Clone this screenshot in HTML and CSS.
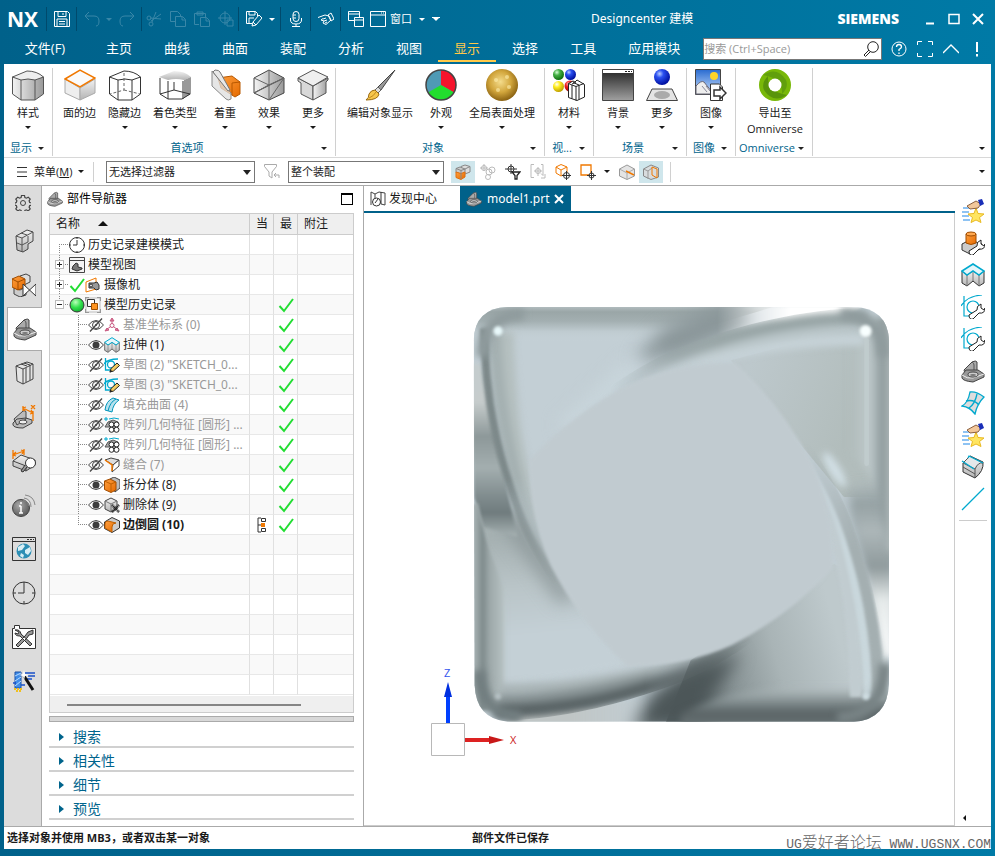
FILE: index.html
```html
<!DOCTYPE html>
<html lang="zh-CN">
<head>
<meta charset="utf-8">
<title>Designcenter 建模</title>
<link rel="stylesheet" href="styles.css">
</head>
<body>
<svg class="defs" aria-hidden="true">
  <defs>
    <linearGradient id="gS" x1="0" y1="0" x2="1" y2="0"><stop offset="0" stop-color="#f4f4f4"/><stop offset="1" stop-color="#999"/></linearGradient>
    <linearGradient id="gT" x1="0" y1="0" x2="0" y2="1"><stop offset="0" stop-color="#f2f2f2"/><stop offset="1" stop-color="#b4b4b4"/></linearGradient>
    <linearGradient id="gO" x1="0" y1="0" x2="1" y2="1"><stop offset="0" stop-color="#ffa040"/><stop offset="1" stop-color="#e56a00"/></linearGradient>
    <linearGradient id="gBg" x1="0" y1="0" x2="0" y2="1"><stop offset="0" stop-color="#222"/><stop offset="1" stop-color="#a0a0a0"/></linearGradient>
    <linearGradient id="gSky" x1="0" y1="0" x2="0" y2="1"><stop offset="0" stop-color="#2a6bd0"/><stop offset="1" stop-color="#cfe4ff"/></linearGradient>
    <radialGradient id="rBlue" cx=".35" cy=".3" r=".7"><stop offset="0" stop-color="#b8ccff"/><stop offset=".35" stop-color="#2a50f0"/><stop offset="1" stop-color="#0010a0"/></radialGradient>
    <radialGradient id="rGreen" cx=".35" cy=".3" r=".7"><stop offset="0" stop-color="#d8ffd8"/><stop offset=".4" stop-color="#44b044"/><stop offset="1" stop-color="#107010"/></radialGradient>
    <radialGradient id="rLime" cx=".4" cy=".3" r=".8"><stop offset="0" stop-color="#baffba"/><stop offset=".5" stop-color="#2fe04a"/><stop offset="1" stop-color="#12a030"/></radialGradient>
    <radialGradient id="rYel" cx=".35" cy=".3" r=".7"><stop offset="0" stop-color="#fff"/><stop offset=".4" stop-color="#ffee20"/><stop offset="1" stop-color="#c0a000"/></radialGradient>
    <radialGradient id="rRed" cx=".35" cy=".3" r=".7"><stop offset="0" stop-color="#ffb0b0"/><stop offset=".4" stop-color="#f02020"/><stop offset="1" stop-color="#a00000"/></radialGradient>
    <radialGradient id="rGold" cx=".45" cy=".4" r=".6"><stop offset="0" stop-color="#f4dc8c"/><stop offset=".55" stop-color="#d2a63c"/><stop offset="1" stop-color="#8a6212"/></radialGradient>
    <radialGradient id="rInfo" cx=".4" cy=".35" r=".7"><stop offset="0" stop-color="#aaa"/><stop offset="1" stop-color="#555"/></radialGradient>
  </defs>

  <symbol id="style" viewBox="0 0 32 32"><path d="M.5 8v17L9 31h14l8.500-6V8z" fill="url(#gS)" stroke="#555"/><path d="M.5 8 15 2q10 0 16.500 6L23 11q-7-2-14 0z" fill="#eee" stroke="#555"/><path d="M9 11v20M23 11v20" stroke="#555"/></symbol>
  <symbol id="faceedge" viewBox="0 0 32 32"><path d="M1 10 16 19v12L1 24z" fill="#eee" stroke="#aaa"/><path d="M31 10 16 19v12l15-7z" fill="url(#gT)" stroke="#aaa"/><path d="M1 10 16 1l15 8-15 9z" fill="#fafafa" stroke="#f07800" stroke-width="1.500"/></symbol>
  <symbol id="hidden" viewBox="0 0 32 32" ><path d="M.5 8 15 2q10 0 16.500 6L23 11q-7-2-14 0zM.5 8v17L9 31h14l8.500-6V8M9 11v20M23 11v20" fill="none" stroke="#333"/><path d="M15 4v17L1 25m14-4 16 4" fill="none" stroke="#666" stroke-dasharray="3 2"/></symbol>
  <symbol id="shade" viewBox="0 0 32 32"><path d="M0 8 15 2q11 0 17 6l-7 3q-8-2-16 0z" fill="url(#gT)"/><path d="M25 11l7-3v17l-7 4z" fill="#999"/><path d="M1 9v16l8 5h14l8-5M9 12v18M15 13v8L1 25m14-4 16 4M24 12v18" fill="none" stroke="#333"/></symbol>
  <symbol id="empha" viewBox="0 0 32 32"><path d="M9 9 23 7l8 6v12l-5 3-14-9z" fill="url(#gO)" stroke="#b85800"/><path d="M23 14l8-1M23 14v12" stroke="#b85800"/><path d="M3 2 22 24v6q-3 2-5 0L3 17z" fill="#ddd" fill-opacity=".75" stroke="#888"/><path d="M6 1q4 0 5 2l10 18-2 1L4 3z" fill="#e8e8e8" stroke="#777"/></symbol>
  <symbol id="effect" viewBox="0 0 32 32"><path d="M1 9 16 1l15 8v15l-15 7-15-7z" fill="url(#gS)" stroke="#444"/><path d="M1 9l15 7 15-7M16 1v15M1 24l15-8M31 9 16 31M16 16l-15 8M16 31V16l15-7M1 24 31 9" fill="none" stroke="#666"/></symbol>
  <symbol id="morebox" viewBox="0 0 32 32"><path d="M1 9l15 8v14L4 25V14l-3-2z" fill="#d8d8d8" stroke="#555"/><path d="M31 9 16 17v14l13-7V13l2-2z" fill="url(#gS)" stroke="#555"/><path d="M1 9 16 1l15 7-15 9z" fill="#efefef" stroke="#555"/></symbol>
  <symbol id="brush" viewBox="0 0 32 32"><path d="M31 1 17 21l-3-3z" fill="#999" stroke="#444"/><path d="M14 18l3 3-3 3-3-3z" fill="#ddd" stroke="#666"/><path d="M11 21l4 4q-1 6-13 6 3-2 3-6 2-4 6-4z" fill="#f7c64c" stroke="#9a6a10"/><path d="M5 29q5-2 7-6" fill="none" stroke="#c08a20"/></symbol>
  <symbol id="pie" viewBox="0 0 32 32"><circle cx="16" cy="16" r="15" fill="#4f9ab5"/><path d="M16 16V1a15 15 0 0 1 13 22.500z" fill="#f5132c"/><path d="M16 16l13 7.500a15 15 0 0 1-26 0z" fill="#22dd2e"/><circle cx="16" cy="16" r="15" fill="none" stroke="#444" stroke-width="1.500"/></symbol>
  <symbol id="gold" viewBox="0 0 32 32"><circle cx="16" cy="16" r="16" fill="url(#rGold)"/><g fill="#fff0b0" opacity=".6"><circle cx="10" cy="11" r="2"/><circle cx="21" cy="8" r="2"/><circle cx="23" cy="18" r="2"/><circle cx="12" cy="21" r="2"/></g></symbol>
  <symbol id="mater" viewBox="0 0 32 32"><circle cx="5.500" cy="5.500" r="5.500" fill="url(#rGreen)"/><circle cx="17.500" cy="5.500" r="5.500" fill="url(#rBlue)"/><circle cx="5.500" cy="17.500" r="5.500" fill="url(#rYel)"/><circle cx="17" cy="17" r="5.500" fill="url(#rRed)"/><path d="M15.500 14.500 20 12l2 1 2-2 7.500 4.500V28L24 31.500l-8.500-3z" fill="#fff" stroke="#222"/><path d="M15.500 14.500 19 16v13.500M19 15l4-2M19 16l4 1.500v14M20 13.500l6 2.500v14.500M23 17.500l8-3" fill="none" stroke="#222"/></symbol>
  <symbol id="backg" viewBox="0 0 32 32"><path d="M.5.5h31v31H.5z" fill="url(#gBg)" stroke="#444"/><path d="M1 1h30v3H1z" fill="#fff"/><path d="M23 2h2v1h-2zM26 2h2v1h-2zM29 2h1v1h-1z" fill="#222"/></symbol>
  <symbol id="scene" viewBox="0 0 32 32"><circle cx="16" cy="8" r="8" fill="url(#rBlue)"/><path d="M6 20h20l5.500 11.500H.5z" fill="#e4e4e4" stroke="#444"/><ellipse cx="16" cy="26" rx="8" ry="4" fill="#aaa"/></symbol>
  <symbol id="image" viewBox="0 0 32 32"><path d="M.5.5h25v25H.5z" fill="url(#gSky)" stroke="#444"/><circle cx="19" cy="7" r="4" fill="#ffd42a"/><path d="M1 17q5-6 8-4l8 10v2H1z" fill="#eee" stroke="#667"/><path d="M7 17l5 6M11 17l4 5" stroke="#889"/><path d="M15.500 15h9l3 3v13.500h-12z" fill="#fff" stroke="#333"/><path d="M19 21h6v-3l6 6-6 6v-3h-6z" fill="#fff" stroke="#333" stroke-width="1.500"/></symbol>
  <symbol id="omni" viewBox="0 0 32 32"><circle cx="16" cy="16" r="11" fill="none" stroke="#78b808" stroke-width="10"/><path d="M4 6Q18-3 27 11q3 7-4 14 1-16-19-19z" fill="#4e8a10" opacity=".55"/><path d="M28 26Q14 35 5 21 2 14 9 7 8 23 28 26z" fill="#3f760c" opacity=".55"/><circle cx="16" cy="16" r="6.500" fill="#fff"/></symbol>

  <symbol id="save" viewBox="0 0 16 16"><path d="M.5.5h13l2 2v13H.5zM4 .5v5h8v-5M9 2v2M3 15.500V8h10v7.500M5 10.500h6M5 13h6" fill="none" stroke="currentColor"/></symbol>
  <symbol id="undo" viewBox="0 0 16 16"><path d="M5 1 1 5l4 4M1 5h9q5 0 5 5t-3 5" fill="none" stroke="currentColor"/></symbol>
  <symbol id="redo" viewBox="0 0 16 16"><path d="M11 1l4 4-4 4M15 5H6q-5 0-5 5t3 5" fill="none" stroke="currentColor"/></symbol>
  <symbol id="cut" viewBox="0 0 16 16"><path d="M15 3 5 10M15 8 4 7M10 1 6 11" fill="none" stroke="currentColor"/><circle cx="3" cy="7" r="2" fill="none" stroke="currentColor"/><circle cx="5" cy="13" r="2" fill="none" stroke="currentColor"/></symbol>
  <symbol id="copy" viewBox="0 0 16 16"><path d="M5 10.500H.5V.5h7l3 3V5M5.500 5.500h7l3 3v7h-10zM12 6v3h3" fill="none" stroke="currentColor"/></symbol>
  <symbol id="paste" viewBox="0 0 16 16"><path d="M5 13.500H.5V2.500h11V6M3 4V1h6v3zM6.500 6.500h6l3 3v6h-9zM12 7v3h3" fill="none" stroke="currentColor"/></symbol>
  <symbol id="target" viewBox="0 0 16 16"><circle cx="7" cy="7" r="5" fill="none" stroke="currentColor"/><path d="M7 0v14M0 7h14M9 9h6v6H9z" fill="none" stroke="currentColor"/></symbol>
  <symbol id="saveas" viewBox="0 0 16 16"><path d="M6 12.500H.5V.5h9l2 2V5M3 .5V4h6V.5M3 12V7h5" fill="none" stroke="currentColor"/><path d="M6 15l1-4 6-7 3 3-6 7zM7 11l3 3" fill="none" stroke="currentColor"/></symbol>
  <symbol id="mic" viewBox="0 0 16 16"><rect x="5" y=".5" width="6" height="10" rx="3" fill="none" stroke="currentColor"/><path d="M5 4h3M5 7h3M2.500 7v2q0 4 5.500 4t5.500-4V7M8 13v2.500M4 15.500h8" fill="none" stroke="currentColor"/></symbol>
  <symbol id="hand" viewBox="0 0 16 16"><path d="M0 6.500 7 4l4 1 2 4-5 4.500-3-1.500 1-2-3-1 2-1.500M5 8l3-1M6 10l3-1M7 12l2-1" fill="none" stroke="currentColor"/><path d="M10 4l3-2 3 6-3 2z" fill="none" stroke="currentColor"/></symbol>
  <symbol id="windows" viewBox="0 0 16 16"><path d="M6 9.500H.5v-9h11V6M.5 3h11M6.500 6.500h9v9h-9zM6.500 9h9" fill="none" stroke="currentColor"/></symbol>
  <symbol id="window" viewBox="0 0 16 16"><path d="M.5.500h15v15H.5zM.5 4h15M11 2h1M13 2h1" fill="none" stroke="currentColor"/></symbol>
  <symbol id="search" viewBox="0 0 16 16"><circle cx="10" cy="6" r="5.300" fill="none" stroke="#222"/><path d="M6 9 1 14l1.500 1.500 5-5" fill="none" stroke="#222"/></symbol>
  <symbol id="help" viewBox="0 0 16 16"><circle cx="8" cy="8" r="7" fill="none" stroke="#fff"/><path d="M5.500 6q0-2.500 2.500-2.500T10.500 6Q10.500 7 8 8.500V10M8 11.500V13" fill="none" stroke="#fff" stroke-width="1.300"/></symbol>
  <symbol id="full" viewBox="0 0 16 16"><path d="M.5 4V.5H5M11 .5h4.500V4M15.500 12v3.500H11M5 15.500H.5V12" fill="none" stroke="#fff"/></symbol>

  <symbol id="part" viewBox="0 0 24 24"><path d="M3 11 11 3q4-2 5 0v9l-11 6z" fill="#aaa" stroke="#444"/><path d="M11 3q2 1 2 3v6" fill="none" stroke="#555"/><path d="M1 16l4-5 12 0 6 4v3l-11 5Q2 22 1 19z" fill="#999" stroke="#444"/><path d="M1 16q5 4 11 3l11-4" fill="none" stroke="#eee"/><ellipse cx="12" cy="15.500" rx="5" ry="2.500" fill="#ccc" stroke="#444"/><ellipse cx="12" cy="16" rx="3" ry="1" fill="#777"/></symbol>
  <symbol id="gear" viewBox="0 0 16 16"><circle cx="8" cy="8" r="2.500" fill="none" stroke="#444"/><path d="M6.500.5h3l.4 2 1.500.7 1.800-1 2 2-1.100 1.700.6 1.600 2 .4v2.300l-2 .4-.6 1.500 1.100 1.800-2 2-1.800-1.100-1.500.6-.4 2h-3l-.4-2-1.500-.6-1.800 1.100-2-2 1.100-1.800-.6-1.500-1.500-.4V8l1.500-.5.6-1.600-1.100-1.700 2-2 1.800 1 1.500-.7z" fill="none" stroke="#444" stroke-width="1.200"/></symbol>
  <symbol id="assy" viewBox="0 0 24 24"><path d="M4 7 15 1l6 2v9l-5 3v5l-5 3-6-2z" fill="url(#gT)" stroke="#444"/><path d="M4 7l6 2 11-6M10 9v14M5 14l5 2 6-3V7M9 4l6 2" fill="none" stroke="#555"/></symbol>
  <symbol id="constr" viewBox="0 0 24 24"><path d="M2 15l6 2 6-3v8l-6 2-6-3z" fill="#ccc" stroke="#444"/><path d="M8 3l6-2 4 2v6l-6 3z" fill="#ddd" stroke="#444"/><path d="M0 6l7-3 6 3v8l-7 3-6-3z" fill="url(#gO)" stroke="#a04c00"/><path d="M0 6l6 3 7-3M6 9v8" fill="none" stroke="#a04c00"/><path d="M11 11l13 12V11L11 23z" fill="#fff" stroke="#333"/></symbol>
  <symbol id="library" viewBox="0 0 24 24"><path d="M4 5 15 1l6 2v15l-10 5-6-3z" fill="#e4e4e4" stroke="#444"/><path d="M4 5l7 3v15M11 8l10-5M14 7v14M9 3l6 2M12 2l6 2v15" fill="none" stroke="#444"/></symbol>
  <symbol id="pmi" viewBox="0 0 24 24"><path d="M2 14 11 6q3-1 3 1v7l-9 6zM1 18l4-4 9-1 6 2v3l-9 5Q2 23 1 20z" fill="#bbb" stroke="#444"/><ellipse cx="11" cy="17" rx="4" ry="2" fill="#eee" stroke="#444"/><path d="M11 1v5M21 6v10M11 3l10 5M14 2l-3 1 2 3M19 5l2 3-3 1M19 0l4 4M23 0l-4 4" fill="none" stroke="#f07800" stroke-width="1.300"/></symbol>
  <symbol id="measure" viewBox="0 0 24 24"><path d="M1 12l8-6 14 5v5l-9 6-13-5z" fill="url(#gT)" stroke="#444"/><path d="M1 12l13 5 9-6M14 17v5" fill="none" stroke="#444"/><path d="M1 1v9M12 0v6M1 6l11-4M4 3 1 6l3 1M9 1l3 1-2 3" fill="none" stroke="#f07800" stroke-width="1.300"/><circle cx="18.500" cy="14" r="5" fill="#fff" stroke="#333"/><path d="M15 18l-4 5-2-1 4-6" fill="#999" stroke="#333"/></symbol>
  <symbol id="info" viewBox="0 0 24 24"><circle cx="9" cy="15" r="8.500" fill="url(#rInfo)" stroke="#444"/><path d="M9 9v2M9 13v7M7 13h2M7 20h4" stroke="#fff" stroke-width="1.500"/><path d="M12 5q7 1 7 9M13 2q9 1 10 10M11 7q5 1 6 6" fill="none" stroke="#888"/></symbol>
  <symbol id="web" viewBox="0 0 24 24"><path d="M.5.500h23v23H.5zM.5 4.500h23" fill="#ddd" stroke="#333"/><path d="M15 2.500h2M18 2.500h2M21 2.500h1" stroke="#333"/><circle cx="12" cy="14" r="7.500" fill="#2d8fb5"/><path d="M6 10l5-3 2 2-3 4-4 1zM13 13l5-3 1 4-3 4-3-2zM9 16l3 2-1 3-3-2z" fill="#d8eff6"/></symbol>
  <symbol id="clock" viewBox="0 0 24 24"><circle cx="12" cy="12" r="11" fill="none" stroke="#333"/><path d="M12 4v8H6M12 1v3M12 20v3M1 12h3M20 12h3" fill="none" stroke="#333"/></symbol>
  <symbol id="tclock" viewBox="0 0 16 16"><circle cx="8" cy="8" r="7.500" fill="#fff" stroke="#333"/><path d="M8 3v5H4M8 0v2M8 14v2M0 8h2M14 8h2" fill="none" stroke="#333"/></symbol>
  <symbol id="tools" viewBox="0 0 24 24"><path d="M.5 3.500h2v-3h5v3h16v20H.5z" fill="#fff" stroke="#333"/><path d="M3 5q5-1 6 4l11 10-2 2L8 11Q3 11 3 8l3 1 1-2zM21 5l-5 2-3 4-9 9 2 2 9-9 2-3 4-1z" fill="#999" stroke="#333"/></symbol>
  <symbol id="wizard" viewBox="0 0 24 24"><path d="M3 3h6v16H3z" fill="#3f8ce8" stroke="#1850a8"/><path d="M3 7l6-3M3 12l6-4M3 17l6-5" stroke="#b8dcff"/><path d="M23 4H13M23 7h-7M20 10h-5M9 16h4M1 14h3" stroke="#1850c8" stroke-width="1.500"/><path d="M12 7l9 14" stroke="#111" stroke-width="3"/><path d="M12 1l1 4 4 1-4 1-1 4-1-4-4-1 4-1z" fill="#fff"/><path d="M2 20h8M4 22h5" stroke="#f0c020" stroke-width="2" stroke-dasharray="2 1"/></symbol>

  <symbol id="view" viewBox="0 0 16 16"><path d="M.5.500h15v15H.5z" fill="#f4f4f4" stroke="#444"/><path d="M.5 3.500h15" stroke="#444"/><path d="M4 9l3-3 2 1v3l4 1v1l-5 2-5-2z" fill="#777" stroke="#333"/></symbol>
  <symbol id="tick" viewBox="0 0 16 16"><path d="M1.500 9l4.500 5L15 2" fill="none" stroke="#22dd33" stroke-width="2"/></symbol>
  <symbol id="camera" viewBox="0 0 16 16"><path d="M1 5l10-4v11L1 15z" fill="#fff" stroke="#f07800"/><path d="M4 6h5l3-1 2 3v4l-3 1-2-2H4z" fill="#999" stroke="#333"/><circle cx="6" cy="8.500" r="1.500" fill="#ddd" stroke="#333"/></symbol>
  <symbol id="ball" viewBox="0 0 16 16"><circle cx="8" cy="8" r="7" fill="url(#rLime)" stroke="#333"/></symbol>
  <symbol id="history" viewBox="0 0 16 16"><path d="M.5 4V.5H4M12 .5h3.500V4M15.500 12v3.500H12M4 15.500H.5V12" fill="none" stroke="#777"/><path d="M1 1h14v14H1z" fill="none" stroke="#bbb"/><path d="M2.500 2.500h7v7h-7z" fill="#fff" stroke="#333"/><path d="M6.500 6.500h6v6h-6z" fill="#ff9420" stroke="#a05000"/></symbol>
  <symbol id="eye" viewBox="0 0 16 16"><path d="M.5 8q3.500-4.500 7.500-4.500T15.500 8q-3.500 4.500-7.500 4.500T.5 8z" fill="#fff" stroke="#444"/><circle cx="8" cy="8" r="3.500" fill="#3c3c3c"/></symbol>
  <symbol id="eyeoff" viewBox="0 0 16 16"><path d="M.5 8q3.500-4.500 7.500-4.500T15.500 8q-3.500 4.500-7.500 4.500T.5 8z" fill="none" stroke="#444"/><circle cx="8" cy="8" r="3.500" fill="none" stroke="#444"/><circle cx="8" cy="8" r="1" fill="#444"/><path d="M2 14.500 14 1.500" stroke="#444" stroke-width="1.300"/></symbol>
  <symbol id="csys" viewBox="0 0 16 16"><path d="M8 8.500V2M8 8.500 2 13M8 8.500l6 4.500M8 1 6 4h4zM1 14l4-1-2-2zM15 14l-4-1 2-2z" fill="#e8a0b8" stroke="#c85880"/><circle cx="8" cy="8.500" r="2" fill="#fff" stroke="#c85880"/></symbol>
  <symbol id="extrude" viewBox="0 0 24 24"><path d="M1 8v12l5 3 6-5 6 5 5-3V8l-5 4-6-4-6 4z" fill="url(#gT)" stroke="#333"/><path d="M6 12v11M12 8v10M18 12v11" stroke="#777"/><path d="M1 8 12 1l11 7-5 4-6-4-6 4z" fill="#e6f6fa" stroke="#00a9ce" stroke-width="1.500"/></symbol>
  <symbol id="sketch" viewBox="0 0 16 16"><path d="M1.500 1v12H6M0 7q3-5 14-5" fill="none" stroke="#00a9ce" stroke-width="1.300"/><circle cx="7" cy="7.500" r="3.500" fill="none" stroke="#00a9ce" stroke-width="1.300"/><path d="M6 15l1-3.500 6-5.500 2.500 2.500-6 5.500z" fill="#f5cc60" stroke="#222"/><path d="M5.500 15.500l1-3 2 2z" fill="#222"/></symbol>
  <symbol id="fill" viewBox="0 0 16 16"><path d="M1 13Q2 4 9 1l6 2q-6 4-7 12z" fill="#b8e2ee" stroke="#0095bb"/><path d="M4 14Q6 5 12 2" fill="none" stroke="#0095bb"/></symbol>
  <symbol id="pattern" viewBox="0 0 16 16"><path d="M0 2h4M2 0v4M5 2q5-2 10 0" stroke="#00a9ce" fill="none"/><path d="M1 10l3-5 5-2 5 2v5H4z" fill="#aaa" stroke="#555"/><g fill="#fff" stroke="#222"><circle cx="7.500" cy="7.500" r="2.500"/><circle cx="12.500" cy="7.500" r="2.500"/><circle cx="7.500" cy="12.800" r="2.500"/><circle cx="12.500" cy="12.800" r="2.500"/></g></symbol>
  <symbol id="sew" viewBox="0 0 16 16"><path d="M1 3l6-2 8 2-6 5z" fill="#ddd" stroke="#444"/><path d="M9 8l6-5v6l-7 6z" fill="#fff" stroke="#444"/><path d="M1 3l7 5v6" fill="none" stroke="#f07800" stroke-width="1.500"/></symbol>
  <symbol id="split" viewBox="0 0 16 16"><path d="M6 2l4-2 6 3v8l-5 4z" fill="#bbb" stroke="#444"/><path d="M.5 4 6 2l6 3v8l-5 2.500-6.500-3z" fill="url(#gO)" stroke="#a04c00"/><path d="M.5 4 7 7l5-2M7 7v8" fill="none" stroke="#c06000"/></symbol>
  <symbol id="delbody" viewBox="0 0 16 16"><path d="M1 4l6-3 6 3v8l-6 3-6-3z" fill="url(#gT)" stroke="#444"/><path d="M1 4l6 3 6-3M7 7v8" fill="none" stroke="#777"/><path d="M8 8l7 7M15 8l-7 7" stroke="#222" stroke-width="2.500" stroke-dasharray="1 .5"/></symbol>
  <symbol id="blend" viewBox="0 0 16 16"><path d="M.5 5 8 .5 15.500 4v7L8 15.500l-7.500-4z" fill="#ccc" stroke="#333"/><path d="M1 7q0-3 3-3l8 2q-4 0-4 4v5l-7-4z" fill="url(#gO)" stroke="#c06000"/></symbol>
  <symbol id="branch" viewBox="0 0 10 16"><path d="M4 1H1v14h3M1 8h3" fill="none" stroke="#333"/><path d="M4.500 1.500h4v3h-4zM4.500 11.500h4v3h-4z" fill="#fff" stroke="#333"/><path d="M4 6h4v4H4z" fill="#f07800"/></symbol>

  <symbol id="fcyl" viewBox="0 0 16 16"><path d="M6 2.500 10 1l5 1.500V8l-5 2z" fill="#ddd" stroke="#888"/><path d="M1 4.500 5 3l5 2v4L6 10 1 8.500z" fill="#ccc" stroke="#888"/><path d="M1 8l5 1.500L10 8v5l-4 2.500-5-2z" fill="url(#gO)" stroke="#e07010"/><path d="M6 6.500V15M1 4.500l5 2L10 5l5-2.500" fill="none" stroke="#888"/></symbol>
  <symbol id="chain" viewBox="0 0 16 16"><path d="M4 0v7M0 4h8" stroke="#bbb"/><g fill="none" stroke="#bbb"><circle cx="4" cy="4" r="2.500"/><circle cx="9" cy="8" r="3"/><circle cx="12" cy="6" r="3"/><circle cx="8" cy="13" r="2.500"/></g></symbol>
  <symbol id="ptfilter" viewBox="0 0 16 16"><circle cx="6" cy="5" r="3" fill="none" stroke="#333"/><path d="M6 0v10M0 5h12" stroke="#333"/><path d="M7 8h8l-3 3.500V15l-2 0v-3.500z" fill="#fff" stroke="#222" stroke-width="1.300"/></symbol>
  <symbol id="snapoff" viewBox="0 0 16 16"><path d="M4 .5H1v13h3M11 .5h2v11l-2-2M8 3v9M4 7h8M11 14h4v-4" fill="none" stroke="#bbb"/><circle cx="8" cy="7" r="2.500" fill="none" stroke="#bbb"/></symbol>
  <symbol id="orient" viewBox="0 0 16 16"><path d="M1 3l5-2.500L12 3v6l-6 3-5-3zM1 3l5 3 6-3M6 6v6" fill="#fff" stroke="#f07800"/><circle cx="11.500" cy="11.500" r="3" fill="#fff" stroke="#333"/><path d="M11.500 7v9M7 11.500h9" stroke="#333"/></symbol>
  <symbol id="rect" viewBox="0 0 16 16"><path d="M1 1h10v10H1z" fill="none" stroke="#f07800" stroke-width="1.300"/><circle cx="11.500" cy="11.500" r="2.500" fill="#fff" stroke="#333"/><path d="M11.500 7v9M7 11.500h9" stroke="#333"/></symbol>
  <symbol id="cube1" viewBox="0 0 16 16"><path d="M.5 5 8 1l7.500 4v7L8 15.500.5 12z" fill="#e4e4e4" stroke="#999"/><path d="M.5 5 8 9l7.500-4M8 9v6" fill="none" stroke="#aaa"/><path d="M7 7l8 4" stroke="#f07800" stroke-width="1.500"/></symbol>
  <symbol id="cube2" viewBox="0 0 16 16"><path d="M.5 5 8 1l7.500 3v9L8 15.500.5 12z" fill="#d8dcde" stroke="#888"/><path d="M.5 5 5 7v8M5 7l4-3" fill="none" stroke="#999"/><path d="M9 3v8l5 3V5z" fill="none" stroke="#f07800"/></symbol>
  <symbol id="funnel" viewBox="0 0 16 16"><path d="M.5.500h12v2L8 8v6l-3-2V8L.5 2.500zM10 11h5v3M12 9l-2 2 2 2" fill="none" stroke="#aaa"/></symbol>
  <symbol id="discover" viewBox="0 0 16 16"><path d="M1 1l4 2v6M1 1v13M5 3l4-2 6 1v12l-4-1" fill="none" stroke="#444"/><circle cx="6.500" cy="11" r="4" fill="#fff" stroke="#333"/><path d="M5 12l3-4M11 1v12" stroke="#333"/></symbol>

  <symbol id="fav" viewBox="0 0 24 24"><path d="M2 9h8M1 13h7M1 17h7M2 21h7" stroke="#6ab0f0" stroke-width="1.300"/><path d="M15 9l2 5.500 6 .5-4.500 3.500 1.500 5-5-2.500-5 2.500 1.500-5L7 15l6-.5z" fill="#ffe560" stroke="#e8b820"/><path d="M6 7l9-5 5 3-3 4-8 1z" fill="#f2c79a" stroke="#8a6040"/><path d="M17 1l4-1 2 5-4 2z" fill="#1a2fb8"/></symbol>
  <symbol id="cylwrench" viewBox="0 0 24 24"><path d="M1 13l8-4 12 4v4L9 23l-8-4z" fill="#ccc" stroke="#333"/><path d="M5 3v9q5 3 10 0V3z" fill="url(#gO)" stroke="#a04c00"/><ellipse cx="10" cy="3" rx="5" ry="2" fill="#ffa850" stroke="#a04c00"/><path d="M8 20l8-5q-1-4 4-6v4l3 2 1-2q0 6-6 5l-6 6q-4 1-4-4z" fill="#fff" stroke="#222"/></symbol>
  <symbol id="skwrench" viewBox="0 0 24 24"><path d="M3 1v20h7M0 11Q6 1 21 0" fill="none" stroke="#00a9ce" stroke-width="1.200"/><circle cx="12" cy="12" r="6" fill="none" stroke="#00a9ce" stroke-width="1.200"/><path d="M8 20l8-5q-1-4 4-6v4l3 2 1-2q0 6-6 5l-6 6q-4 1-4-4z" fill="#fff" stroke="#222"/></symbol>
  <symbol id="mesh" viewBox="0 0 24 24"><path d="M1 15Q7 12 9 1q6-1 14 5-7 7-9 17-5-7-13-8z" fill="#ddd" stroke="#00a9ce" stroke-width="1.300"/><path d="M8 17q6-4 8-14M5 10q8-2 13 4" fill="none" stroke="#00a9ce" stroke-width="1.300"/></symbol>
  <symbol id="trim" viewBox="0 0 24 24"><path d="M2 8 9 1l13 6q1 9-8 16L2 17z" fill="url(#gT)" stroke="#333"/><path d="M9 1l13 7q-5-1-8 6L2 8z" fill="#e4e8ea" stroke="#555"/><path d="M7 3l1-2 14 7M1 6l12 8" fill="none" stroke="#00a9ce" stroke-width="1.300"/><path d="M14 14v9M2 12l12 7" fill="none" stroke="#555"/></symbol>
  <symbol id="line" viewBox="0 0 24 24"><path d="M1 23 23 1" stroke="#00a9ce" stroke-width="1.300"/></symbol>
</svg>

<header class="top">
  <div class="title-row">
    <strong class="nx">NX</strong>
    <i class="sep"></i>
    <button class="q" aria-label="保存"><svg><use href="#save"/></svg></button><i class="sep"></i>
    <button class="q dim" aria-label="撤销"><svg><use href="#undo"/></svg></button><i class="arr dim"></i><button class="q dim" aria-label="重做"><svg><use href="#redo"/></svg></button><i class="sep"></i>
    <button class="q tight dim" aria-label="剪切"><svg><use href="#cut"/></svg></button><button class="q tight dim" aria-label="复制"><svg><use href="#copy"/></svg></button><button class="q tight dim" aria-label="粘贴"><svg><use href="#paste"/></svg></button><button class="q tight dim" aria-label="重复"><svg><use href="#target"/></svg></button><i class="sep"></i>
    <button class="q" aria-label="另存为"><svg><use href="#saveas"/></svg></button><i class="arr wide"></i><i class="sep"></i>
    <button class="q" aria-label="语音"><svg><use href="#mic"/></svg></button><i class="sep"></i>
    <button class="q" aria-label="触控"><svg><use href="#hand"/></svg></button><i class="sep"></i>
    <button class="q" aria-label="切换窗口"><svg><use href="#windows"/></svg></button>
    <button class="winbtn"><svg><use href="#window"/></svg>窗口<i class="arr"></i></button>
    <i class="arr bar"></i>
    <span class="app">Designcenter 建模</span>
    <strong class="brand">SIEMENS</strong>
    <div class="wctl">
      <button aria-label="最小化"><svg viewBox="0 0 12 12"><path d="M2 10.500h8" stroke="#fff" stroke-width="2"/></svg></button>
      <button aria-label="最大化"><svg viewBox="0 0 12 12"><path d="M1 1.500h10v9H1z" fill="none" stroke="#fff" stroke-width="1.500"/></svg></button>
      <button aria-label="关闭"><svg viewBox="0 0 12 12"><path d="M1 1l10 10M11 1 1 11" stroke="#fff" stroke-width="2"/></svg></button>
    </div>
  </div>
  <nav class="tab-row">
    <a class="file" href="#">文件(F)</a><a href="#">主页</a><a href="#">曲线</a><a href="#">曲面</a><a href="#">装配</a><a href="#">分析</a><a href="#">视图</a><a class="on" href="#">显示</a><a href="#">选择</a><a href="#">工具</a><a href="#">应用模块</a>
    <div class="find"><input type="search" aria-label="搜索" placeholder="搜索 (Ctrl+Space)"><button aria-label="搜索"><svg><use href="#search"/></svg></button></div>
    <div class="tctl">
      <button aria-label="帮助"><svg><use href="#help"/></svg></button>
      <button aria-label="全屏"><svg><use href="#full"/></svg></button>
      <button aria-label="折叠"><svg viewBox="0 0 16 16"><path d="M0 12l8-8 8 8" fill="none" stroke="#fff" stroke-width="1.300"/></svg></button>
      <button aria-label="提醒"><svg viewBox="0 0 16 16"><path d="M8 1v10M8 13v2.500" stroke="#fff" stroke-width="2"/></svg></button>
    </div>
  </nav>
</header>

<div class="frame">
<section class="ribbon">
  <div class="group"><div class="items"><button><svg><use href="#style"/></svg>样式<i class="arr"></i></button></div><div class="gl"><span>显示</span><i class="arr"></i></div></div>
  <div class="group lead"><div class="items">
    <button><svg><use href="#faceedge"/></svg>面的边</button>
    <button><svg><use href="#hidden"/></svg>隐藏边<i class="arr"></i></button>
    <button><svg><use href="#shade"/></svg>着色类型<i class="arr"></i></button>
    <button><svg><use href="#empha"/></svg>着重<i class="arr"></i></button>
    <button><svg><use href="#effect"/></svg>效果<i class="arr"></i></button>
    <button><svg><use href="#morebox"/></svg>更多<i class="arr"></i></button>
  </div><div class="gl"><span>首选项</span><i class="arr"></i></div></div>
  <div class="group roomy"><div class="items">
    <button><svg><use href="#brush"/></svg>编辑对象显示</button>
    <button><svg><use href="#pie"/></svg>外观<i class="arr"></i></button>
    <button><svg><use href="#gold"/></svg>全局表面处理<i class="arr"></i></button>
  </div><div class="gl"><span>对象</span><i class="arr"></i></div></div>
  <div class="group"><div class="items"><button><svg><use href="#mater"/></svg>材料<i class="arr"></i></button></div><div class="gl"><span>视...</span><i class="arr"></i></div></div>
  <div class="group"><div class="items"><button><svg><use href="#backg"/></svg>背景<i class="arr"></i></button><button><svg><use href="#scene"/></svg>更多<i class="arr"></i></button></div><div class="gl"><span>场景</span><i class="arr"></i></div></div>
  <div class="group"><div class="items"><button><svg><use href="#image"/></svg>图像<i class="arr"></i></button></div><div class="gl"><span>图像</span><i class="arr"></i></div></div>
  <div class="group roomy"><div class="items"><button><svg><use href="#omni"/></svg>导出至<br>Omniverse</button></div><div class="gl"><span>Omniverse</span><i class="arr"></i></div></div>
  <i class="arr end"></i>
</section>

<section class="toolbar">
  <button class="menu"><svg viewBox="0 0 12 12"><path d="M1 1.500h10M1 6h10M1 10.500h10" stroke="#333"/></svg><span>菜单(<u>M</u>)</span><i class="arr"></i></button>
  <i class="vsep"></i>
  <label class="combo c1"><select aria-label="选择过滤器"><option>无选择过滤器</option></select></label>
  <button class="tb funnel" aria-label="重置过滤器"><svg><use href="#funnel"/></svg></button>
  <label class="combo c2"><select aria-label="选择范围"><option>整个装配</option></select></label>
  <div class="tbs">
    <button class="tb on" aria-label="常规选择"><svg><use href="#fcyl"/></svg></button>
    <button class="tb" aria-label="链"><svg><use href="#chain"/></svg></button>
    <button class="tb" aria-label="点过滤"><svg><use href="#ptfilter"/></svg></button>
    <button class="tb" aria-label="捕捉"><svg><use href="#snapoff"/></svg></button>
    <button class="tb" aria-label="定向"><svg><use href="#orient"/></svg></button>
    <button class="tb" aria-label="矩形"><svg><use href="#rect"/></svg></button>
    <i class="arr"></i>
    <button class="tb" aria-label="着色"><svg><use href="#cube1"/></svg></button>
    <button class="tb on" aria-label="截面"><svg><use href="#cube2"/></svg></button>
  </div>
  <i class="vsep"></i>
  <i class="arr end"></i>
</section>

<main>
  <nav class="rail">
    <button aria-label="设置"><svg class="sm"><use href="#gear"/></svg></button>
    <button aria-label="装配导航器"><svg><use href="#assy"/></svg></button>
    <button aria-label="约束导航器"><svg><use href="#constr"/></svg></button>
    <button class="on" aria-label="部件导航器"><svg><use href="#part"/></svg></button>
    <button aria-label="重用库"><svg><use href="#library"/></svg></button>
    <button aria-label="尺寸"><svg><use href="#pmi"/></svg></button>
    <button aria-label="测量"><svg><use href="#measure"/></svg></button>
    <button aria-label="信息"><svg><use href="#info"/></svg></button>
    <button aria-label="浏览器"><svg><use href="#web"/></svg></button>
    <button aria-label="历史"><svg><use href="#clock"/></svg></button>
    <button aria-label="工具"><svg><use href="#tools"/></svg></button>
    <button aria-label="向导"><svg><use href="#wizard"/></svg></button>
  </nav>

  <aside class="panel">
    <h2><svg><use href="#part"/></svg>部件导航器<button class="max" aria-label="最大化"></button></h2>
    <div class="treebox">
    <table>
      <colgroup><col class="cn"><col class="c24"><col class="c24"><col></colgroup>
      <thead><tr><th>名称<i class="up"></i></th><th>当</th><th>最</th><th>附注</th></tr></thead>
      <tbody>
        <tr><td><div class="node root first"><i class="stem"></i><svg><use href="#tclock"/></svg><span>历史记录建模模式</span></div></td><td></td><td></td><td></td></tr>
        <tr><td><div class="node root"><i class="stem"></i><b class="ex plus"></b><svg><use href="#view"/></svg><span>模型视图</span></div></td><td></td><td></td><td></td></tr>
        <tr><td><div class="node root"><i class="stem"></i><b class="ex plus"></b><svg><use href="#tick"/></svg><svg><use href="#camera"/></svg><span>摄像机</span></div></td><td></td><td></td><td></td></tr>
        <tr><td><div class="node root last"><i class="stem"></i><b class="ex"></b><svg><use href="#ball"/></svg><svg><use href="#history"/></svg><span>模型历史记录</span></div></td><td></td><td><svg><use href="#tick"/></svg></td><td></td></tr>
        <tr><td><div class="node off"><i class="stem"></i><svg><use href="#eyeoff"/></svg><svg><use href="#csys"/></svg><span>基准坐标系 (0)</span></div></td><td></td><td><svg><use href="#tick"/></svg></td><td></td></tr>
        <tr><td><div class="node"><i class="stem"></i><svg><use href="#eye"/></svg><svg><use href="#extrude"/></svg><span>拉伸 (1)</span></div></td><td></td><td><svg><use href="#tick"/></svg></td><td></td></tr>
        <tr><td><div class="node off"><i class="stem"></i><svg><use href="#eyeoff"/></svg><svg><use href="#sketch"/></svg><span>草图 (2) "SKETCH_0...</span></div></td><td></td><td><svg><use href="#tick"/></svg></td><td></td></tr>
        <tr><td><div class="node off"><i class="stem"></i><svg><use href="#eyeoff"/></svg><svg><use href="#sketch"/></svg><span>草图 (3) "SKETCH_0...</span></div></td><td></td><td><svg><use href="#tick"/></svg></td><td></td></tr>
        <tr><td><div class="node off"><i class="stem"></i><svg><use href="#eyeoff"/></svg><svg><use href="#fill"/></svg><span>填充曲面 (4)</span></div></td><td></td><td><svg><use href="#tick"/></svg></td><td></td></tr>
        <tr><td><div class="node off"><i class="stem"></i><svg><use href="#eyeoff"/></svg><svg><use href="#pattern"/></svg><span>阵列几何特征 [圆形] ...</span></div></td><td></td><td><svg><use href="#tick"/></svg></td><td></td></tr>
        <tr><td><div class="node off"><i class="stem"></i><svg><use href="#eyeoff"/></svg><svg><use href="#pattern"/></svg><span>阵列几何特征 [圆形] ...</span></div></td><td></td><td><svg><use href="#tick"/></svg></td><td></td></tr>
        <tr><td><div class="node off"><i class="stem"></i><svg><use href="#eyeoff"/></svg><svg><use href="#sew"/></svg><span>缝合 (7)</span></div></td><td></td><td><svg><use href="#tick"/></svg></td><td></td></tr>
        <tr><td><div class="node"><i class="stem"></i><svg><use href="#eye"/></svg><svg><use href="#split"/></svg><span>拆分体 (8)</span></div></td><td></td><td><svg><use href="#tick"/></svg></td><td></td></tr>
        <tr><td><div class="node"><i class="stem"></i><svg><use href="#eye"/></svg><svg><use href="#delbody"/></svg><span>删除体 (9)</span></div></td><td></td><td><svg><use href="#tick"/></svg></td><td></td></tr>
        <tr><td><div class="node last cur"><i class="stem"></i><svg><use href="#eye"/></svg><svg><use href="#blend"/></svg><span>边倒圆 (10)</span></div></td><td><svg><use href="#branch"/></svg></td><td><svg><use href="#tick"/></svg></td><td></td></tr>
        <tr><td></td><td></td><td></td><td></td></tr>
        <tr><td></td><td></td><td></td><td></td></tr>
        <tr><td></td><td></td><td></td><td></td></tr>
        <tr><td></td><td></td><td></td><td></td></tr>
        <tr><td></td><td></td><td></td><td></td></tr>
        <tr><td></td><td></td><td></td><td></td></tr>
        <tr><td></td><td></td><td></td><td></td></tr>
        <tr><td></td><td></td><td></td><td></td></tr>
      </tbody>
    </table>
    <div class="hscroll"><i></i></div>
    </div>
    <div class="splitter"></div>
    <div class="folds"><button>搜索</button><button>相关性</button><button>细节</button><button>预览</button></div>
  </aside>

  <section class="work">
    <div class="docs"><a href="#" class="doc"><svg><use href="#discover"/></svg>发现中心</a><div class="doc on"><svg><use href="#part"/></svg><span>model1.prt</span><button aria-label="关闭"><svg viewBox="0 0 10 10"><path d="M1 1l8 8M9 1 1 9" stroke="#fff" stroke-width="2"/></svg></button></div></div>
    <div class="canvas">
      <svg viewBox="364 213 590 612" preserveAspectRatio="xMinYMin meet">
        <defs>
          <clipPath id="body"><path d="M29 130Q32 34 130 30H1170Q1270 34 1275 130V1160Q1270 1268 1170 1274H130Q36 1266 32 1165Z"/></clipPath>
          <clipPath id="ridge"><path d="M1180 32C1000 42 860 78 740 118 640 150 560 185 430 275L380 310V560H1060L1290 330V20Z"/></clipPath>
          <linearGradient id="fade" x1="440" y1="0" x2="760" y2="0" gradientUnits="userSpaceOnUse"><stop offset="0" stop-color="#000"/><stop offset="1" stop-color="#fff"/></linearGradient>
          <mask id="taper" maskUnits="userSpaceOnUse" x="300" y="0" width="1000" height="600"><path d="M300 0h1000v600H300z" fill="url(#fade)"/></mask>
          <path id="c1" d="M1210 60C990 64 840 104 730 140 630 172 560 205 440 280"/>
          <path id="c2" d="M1200 92C1000 96 850 132 730 162 640 188 560 222 430 300"/>
          <path id="c3" d="M1200 128C1000 130 860 154 730 184 640 204 560 238 420 320"/>
          <filter id="f6" x="-30%" y="-30%" width="160%" height="160%" color-interpolation-filters="sRGB"><feGaussianBlur stdDeviation="5"/></filter>
          <filter id="f12" x="-50%" y="-50%" width="200%" height="200%" color-interpolation-filters="sRGB"><feGaussianBlur stdDeviation="11"/></filter>
          <filter id="f25" x="-60%" y="-60%" width="220%" height="220%" color-interpolation-filters="sRGB"><feGaussianBlur stdDeviation="26"/></filter>
          <linearGradient id="mTop" x1="0" y1="30" x2="0" y2="135" gradientUnits="userSpaceOnUse"><stop offset="0" stop-color="#b0bbbd"/><stop offset=".14" stop-color="#9aa6a7"/><stop offset=".4" stop-color="#a3afb1"/><stop offset=".7" stop-color="#bfcbd0"/><stop offset="1" stop-color="#c5d1d7" stop-opacity="0"/></linearGradient>
          <linearGradient id="mBot" x1="0" y1="1165" x2="0" y2="1274" gradientUnits="userSpaceOnUse"><stop offset="0" stop-color="#bac4c6" stop-opacity="0"/><stop offset=".3" stop-color="#98a3a5"/><stop offset=".6" stop-color="#6e797b"/><stop offset=".8" stop-color="#586163"/><stop offset="1" stop-color="#667072"/></linearGradient>
          <linearGradient id="mRight" x1="1150" y1="0" x2="1275" y2="0" gradientUnits="userSpaceOnUse"><stop offset="0" stop-color="#b3bebe" stop-opacity="0"/><stop offset=".45" stop-color="#bcc7c8"/><stop offset=".6" stop-color="#bac5c7"/><stop offset=".75" stop-color="#97a3a5"/><stop offset=".93" stop-color="#8f9b9d"/><stop offset="1" stop-color="#b3bcbd"/></linearGradient>
          <linearGradient id="mLeft" x1="30" y1="0" x2="135" y2="0" gradientUnits="userSpaceOnUse"><stop offset="0" stop-color="#a8b2b3"/><stop offset=".25" stop-color="#7f8b8c"/><stop offset=".45" stop-color="#9da8a9"/><stop offset=".8" stop-color="#b3bebf"/><stop offset="1" stop-color="#c2ced3" stop-opacity="0"/></linearGradient>
          <linearGradient id="mBR" x1="700" y1="1130" x2="1120" y2="1010" gradientUnits="userSpaceOnUse"><stop offset="0" stop-color="#6c7779"/><stop offset=".22" stop-color="#899496"/><stop offset=".55" stop-color="#a9b4b6"/><stop offset="1" stop-color="#bec9cc"/></linearGradient>
          <linearGradient id="mTR" x1="860" y1="200" x2="1180" y2="330" gradientUnits="userSpaceOnUse"><stop offset="0" stop-color="#bdc8cc"/><stop offset="1" stop-color="#b2bdbc"/></linearGradient>
          <linearGradient id="mBL" x1="300" y1="700" x2="330" y2="1000" gradientUnits="userSpaceOnUse"><stop offset="0" stop-color="#a6b1b2"/><stop offset=".5" stop-color="#b9c4c7"/><stop offset="1" stop-color="#c4d0d6"/></linearGradient>
          <linearGradient id="mShine" x1="760" y1="0" x2="980" y2="0" gradientUnits="userSpaceOnUse"><stop offset="0" stop-color="#fff" stop-opacity="0"/><stop offset="1" stop-color="#fff"/></linearGradient>
          <linearGradient id="mShine2" x1="560" y1="0" x2="330" y2="0" gradientUnits="userSpaceOnUse"><stop offset="0" stop-color="#c0c6c6" stop-opacity="0"/><stop offset="1" stop-color="#c0c6c6"/></linearGradient>
          <linearGradient id="mEdgeL" x1="0" y1="200" x2="0" y2="720" gradientUnits="userSpaceOnUse"><stop offset="0" stop-color="#c3cccd"/><stop offset=".22" stop-color="#c6cccc"/><stop offset=".42" stop-color="#8d9899"/><stop offset=".6" stop-color="#a3aeaf"/><stop offset=".78" stop-color="#7d898b"/><stop offset=".86" stop-color="#6f7b7d"/><stop offset="1" stop-color="#a8b3b4"/></linearGradient>
          <linearGradient id="mEdgeR" x1="0" y1="540" x2="0" y2="1080" gradientUnits="userSpaceOnUse"><stop offset="0" stop-color="#b6c1c4" stop-opacity="0"/><stop offset=".15" stop-color="#96a2a4"/><stop offset=".3" stop-color="#adb7b9"/><stop offset=".5" stop-color="#8f9a9c"/><stop offset=".68" stop-color="#e4e9e9"/><stop offset="1" stop-color="#fff"/></linearGradient>
        </defs>
        <g transform="translate(464 297) scale(.33333)">
          <g clip-path="url(#body)">
            <path d="M0 0h1304v1304H0z" fill="#c3cfd5"/>
            <path d="M800 190 1290 60V600H1140z" fill="url(#mTR)"/>
            <path d="M40 640 150 640 262 804 500 1110 90 1180z" fill="url(#mBL)" filter="url(#f12)"/>
            <path d="M1110 800 1270 900V1290H600L680 1090z" fill="url(#mBR)"/>
            <path d="M0 20h960L560 140H0z" fill="url(#mTop)"/>
            <g filter="url(#f25)">
              <path d="M780 15 600 90 510 190 640 180 860 90 850 15z" fill="#8a9699"/>
              <path d="M140 620 330 900 290 920 120 690z" fill="#8f9a9c"/>
              <path d="M1150 600 1280 580 1280 860 1210 800z" fill="#939fa1"/>
              <path d="M500 1300 560 1190 640 1130 830 1070 740 1200 720 1300z" fill="#4c5658"/>
            </g>
            <path d="M760 25H1200L1150 60 760 130z" fill="url(#mShine)" filter="url(#f6)"/>
            <path d="M20 200H50L160 720 60 690 30 600z" fill="url(#mEdgeL)" filter="url(#f6)"/>
            <path d="M1150 540H1285V1080H1262z" fill="url(#mEdgeR)" filter="url(#f12)"/>
            <path d="M1150 60h150v700H1270Q1250 600 1210 520L1150 460z" fill="url(#mRight)" filter="url(#f12)"/>
            <path d="M20 1240V620H44Q56 720 100 820L135 920V1240z" fill="url(#mLeft)" filter="url(#f6)"/>
            <path d="M1290 1165H1000Q800 1180 650 1250V1295H1290z" fill="url(#mBot)" filter="url(#f12)"/>
            <path d="M130 1285V1255L600 1200 570 1285z" fill="url(#mShine2)" filter="url(#f6)"/>
            <ellipse cx="1112" cy="518" rx="16" ry="60" transform="rotate(-32 1112 518)" fill="#d3e1e7" filter="url(#f12)"/>
            <path d="M300 400Q440 270 520 200" fill="none" stroke="#c9d6dc" stroke-width="50" filter="url(#f25)"/>

            <g clip-path="url(#ridge)" fill="none"><g mask="url(#taper)">
              <g filter="url(#f12)"><use href="#c3" stroke="#c6d2d7" stroke-width="34"/><use href="#c2" stroke="#b8c4c7" stroke-width="32"/><use href="#c1" stroke="#98a5a6" stroke-width="38"/></g>
            </g></g>
            <g transform="rotate(-90 652 652)"><g clip-path="url(#ridge)" fill="none"><g mask="url(#taper)">
              <g filter="url(#f12)"><use href="#c3" stroke="#b4bfbf" stroke-width="42"/><use href="#c2" stroke="#a4b0b1" stroke-width="40"/></g><g filter="url(#f6)"><use href="#c1" stroke="#7d898a" stroke-width="24"/></g>
            </g></g></g>
            <g transform="rotate(180 652 652)"><g clip-path="url(#ridge)" fill="none"><g mask="url(#taper)">
              <g filter="url(#f12)"><use href="#c3" stroke="#a9b4b6" stroke-width="30"/><use href="#c2" stroke="#869193" stroke-width="36"/><use href="#c1" stroke="#5a6466" stroke-width="40"/></g>
            </g></g></g>
            <g transform="rotate(90 652 652)"><g clip-path="url(#ridge)" fill="none"><g mask="url(#taper)">
              <g filter="url(#f6)"><use href="#c3" stroke="#c1ccd0" stroke-width="36"/><use href="#c2" stroke="#c9d7dc" stroke-width="24"/><use href="#c1" stroke="#a4afb1" stroke-width="34"/></g>
            </g></g></g>

            <path d="M196 490Q330 345 500 260 640 200 814 197 958 330 1044 500 1106 640 1107 814 974 958 804 1044 664 1108 490 1107 345 974 260 804 197 664 196 490Z" fill="#c1cbd0" filter="url(#f6)"/>

            <g fill="none" filter="url(#f12)" stroke-width="36">
              <path d="M55 180Q58 52 180 52" stroke="#8f9b9d"/>
              <path d="M1130 52Q1255 55 1258 180" stroke="#8f9b9d"/>
              <path d="M1262 1100Q1258 1258 1120 1262" stroke="#788385"/>
              <path d="M45 1120Q52 1256 170 1258" stroke="#717d7f"/>
            </g>
            <g filter="url(#f6)">
              <circle cx="102" cy="102" r="14" fill="#e8f8fa"/><circle cx="1205" cy="102" r="18" fill="#f8ffff"/>
              <circle cx="102" cy="1198" r="9" fill="#b6c1c4"/><circle cx="1206" cy="1198" r="11" fill="#cddbe0"/>
            </g>
            <path d="M1208 130V500" fill="none" stroke="#c3ced0" stroke-width="14" stroke-linecap="round" opacity=".7"/>
          </g>
        </g>
        <path d="M446 695h4v28h-4z" fill="#0040ff"/><path d="M448 682l4 15h-8z" fill="#0030e0"/>
        <path d="M464 738h27v4h-27z" fill="#d22"/><path d="M504 740l-15-4v8z" fill="#c81818"/>
        <path d="M431.500 723.500h33v32h-33z" fill="#fff" stroke="#b8b8b8"/>
        <text x="444" y="677" class="axis z">Z</text><text x="510" y="744" class="axis x">X</text>
      </svg>
    </div>
  </section>

  <nav class="side">
    <button aria-label="收藏"><svg><use href="#fav"/></svg></button>
    <button aria-label="编辑特征"><svg><use href="#cylwrench"/></svg></button>
    <button aria-label="拉伸"><svg><use href="#extrude"/></svg></button>
    <button aria-label="编辑草图"><svg><use href="#skwrench"/></svg></button>
    <button aria-label="编辑曲线"><svg><use href="#skwrench"/></svg></button>
    <button aria-label="部件"><svg><use href="#part"/></svg></button>
    <button aria-label="曲面"><svg><use href="#mesh"/></svg></button>
    <button aria-label="收藏"><svg><use href="#fav"/></svg></button>
    <button aria-label="修剪"><svg><use href="#trim"/></svg></button>
    <button aria-label="直线"><svg><use href="#line"/></svg></button>
    <hr>
    <i class="left"></i>
  </nav>
</main>

<footer><span>选择对象并使用 MB3，或者双击某一对象</span><span>部件文件已保存</span></footer>
</div>
<div class="mark">UG<span>爱好者论坛</span> WWW.UGSNX.COM</div>
</body>
</html>
```
FILE: styles.css
```css
* { box-sizing: border-box; }
body {
  margin: 0;
  min-height: 100vh;
  display: flex;
  flex-direction: column;
  position: relative;
  background: linear-gradient(90deg, #00618a, #007aa6);
  font: 11px/16px "Open Sans", "Noto Sans CJK SC", sans-serif;
  color: #1a1a1a;
}
button { font: inherit; color: inherit; background: none; border: 0; padding: 0; margin: 0; }
a { color: inherit; text-decoration: none; }
svg { display: block; flex: none; }
.defs { position: absolute; width: 0; height: 0; }

.arr { display: block; flex: none; width: 0; height: 0; border: 3px solid transparent; border-top-color: currentColor; border-bottom: 0; }

/* title bar */
.title-row { display: flex; align-items: center; height: 38px; color: #fff; }
.nx { width: 46px; padding-left: 7px; font-size: 21px; line-height: 24px; }
.sep { width: 1px; height: 24px; background: #004a6c; }
.q { width: 29px; height: 24px; display: grid; place-items: center; }
.q.tight { width: 24px; }
.q svg, .winbtn svg { width: 16px; height: 16px; }
.dim { color: #3987a8; }
.arr.wide { margin: 0 5px 0 1px; }
.winbtn { display: flex; align-items: center; gap: 4px; }
.winbtn .arr { margin-left: 3px; }
.arr.bar { margin-left: 8px; position: relative; }
.arr.bar::before { content: ""; position: absolute; left: -4px; top: -4px; width: 8px; height: 1px; background: #fff; }
.app { margin-left: auto; font-family: "Noto Sans", "Noto Sans CJK SC", sans-serif; font-size: 12px; }
.brand { margin-left: 144px; font-size: 14px; font-weight: 800; }
.wctl { display: flex; gap: 12px; margin: 0 11px 0 25px; }
.wctl svg { width: 12px; height: 12px; }

.tab-row { display: flex; height: 26px; color: #fff; font-size: 13px; }
.tab-row a { padding: 1px 16px 0; height: 24px; line-height: 18px; white-space: nowrap; }
.tab-row .file { width: 90px; padding: 1px 0 0; text-align: center; }
.tab-row .on { color: #ffc94a; border-bottom: 2px solid #ffc94a; }
.find { flex: 1; display: flex; height: 22px; margin-left: 7px; background: #fff; border: 1px solid #777; }
.find input { flex: 1; min-width: 0; border: 0; padding: 0; font: inherit; font-size: 11px; background: none; }
.find input::placeholder { color: #999; opacity: 1; }
.find button { width: 20px; display: grid; place-items: center; }
.tctl { display: flex; align-items: center; height: 22px; gap: 10px; margin: 0 10px 0 9px; }
.tctl svg, .find svg { width: 16px; height: 16px; }

.frame { flex: 1; display: flex; flex-direction: column; margin: 0 4px 7px; background: #fff; }

/* ribbon */
.ribbon { display: flex; height: 94px; border-bottom: 1px solid #d8d8d8; padding: 4px 0 1px; }
.group { display: flex; flex-direction: column; justify-content: space-between; border-right: 1px solid #d0d0d0; }
.items { display: flex; padding: 0 2px; }
.lead .items { padding: 0 0 0 4px; }
.roomy .items { padding: 0 3px 0 5px; }
.items button { min-width: 43px; padding: 1px 6px 0; display: flex; flex-direction: column; align-items: center; }
.items svg { width: 32px; height: 32px; margin-bottom: 4px; }
.items .arr { margin-top: 5px; }
.gl { display: flex; align-items: center; color: #00648c; height: 16px; padding-right: 8px; }
.gl span { flex: 1; text-align: center; }
.gl .arr { color: #222; }
.arr.end { margin-left: auto; margin-right: 6px; }
.ribbon .end { align-self: flex-end; margin-bottom: 6px; }

/* selection bar */
.toolbar { display: flex; align-items: center; height: 28px; border-bottom: 1px solid #aaa; }
.menu { display: flex; align-items: center; gap: 6px; padding-left: 12px; width: 82px; }
.menu svg { width: 12px; height: 12px; }
.vsep { width: 1px; height: 20px; margin: 0 7px; background: #d0d0d0; }
.combo { position: relative; height: 22px; }
.combo::after { content: ""; position: absolute; right: 4px; top: 9px; border: 4px solid transparent; border-top: 5px solid #222; border-bottom: 0; pointer-events: none; }
.combo select { appearance: none; width: 100%; height: 22px; border: 1px solid #777; border-radius: 0; background: #fff; padding: 0 2px; font: inherit; color: inherit; }
.c1 { width: 149px; margin-left: 5px; }
.c2 { width: 156px; }
.tb { width: 25px; height: 22px; display: grid; place-items: center; }
.tb svg { width: 16px; height: 16px; }
.tb.on { width: 24px; background: #cfe6ec; }
.funnel { width: 33px; }
.tbs { display: flex; align-items: center; margin-left: 7px; }
.tbs .arr { margin: 0 4px; }

main { flex: 1; display: flex; }
.rail { width: 38px; display: flex; flex-direction: column; background: #dcdcdc; border-right: 1px solid #aaa; }
.rail button { height: 44px; display: grid; place-items: center; padding-left: 2px; }
.rail button:first-child { height: 33px; padding: 0; }
.rail svg { width: 24px; height: 24px; }
.rail svg.sm { width: 16px; height: 16px; }
.rail .on { margin: 0 -1px 0 3px; padding: 0 1px 0 0; background: #fff; border: 1px solid #aaa; border-right: 0; }

.panel { width: 322px; padding: 0 9px 0 7px; border-right: 1px solid #aaa; }
h2 { display: flex; align-items: center; gap: 4px; height: 27px; margin: 0; padding: 0 1px 2px 0; font-size: 12px; font-weight: 400; color: #000; }
h2 svg { width: 16px; height: 16px; margin-left: -2px; }
.max { width: 12px; height: 12px; margin-left: auto; border: 1px solid #000; border-top-width: 2px; }
.treebox { border: 1px solid #ccc; }
table { width: 100%; table-layout: fixed; border-spacing: 0; font: 12px/18px "Noto Sans", "Noto Sans CJK SC", sans-serif; }
.cn { width: 200px; }
.c24 { width: 24px; }
th { height: 21px; padding: 0 6px; text-align: left; font-weight: 400; background: #efefef; border-right: 1px solid #ccc; border-bottom: 1px solid #ccc; white-space: nowrap; }
td { height: 20px; padding: 0; border-right: 1px solid #e0e0e0; border-bottom: 1px solid #e8e8e8; }
th:last-child, td:last-child { border-right: 0; }
tbody tr:nth-child(even) { background: #f9f9f9; }
td svg { width: 16px; height: 16px; margin: 0 auto; }
td:nth-child(2) svg { width: 10px; }
.up { display: inline-block; margin-left: 18px; border: 5px solid transparent; border-bottom-color: #111; border-top: 0; vertical-align: 2px; }
.node { position: relative; display: flex; align-items: center; height: 19px; padding-left: 28px; white-space: nowrap; overflow: hidden; }
.node svg { margin: 0; }
.node span { margin-left: 3px; }
.node.root { padding-left: 9px; }
.stem { align-self: stretch; width: 10px; flex: none; background: repeating-linear-gradient(0deg, #888 0 1px, transparent 1px 2px) 0 0 / 1px 100% no-repeat, repeating-linear-gradient(90deg, #888 0 1px, transparent 1px 2px) 0 50% / 100% 1px no-repeat; }
.last .stem { background-size: 1px 50%, 100% 1px; }
.first .stem { background-size: 1px 50%, 100% 1px; background-position: 0 100%, 0 50%; }
.ex { position: absolute; left: 5px; top: 5px; width: 9px; height: 9px; border: 1px solid #bbb; background: linear-gradient(#222, #222) 50% 50% / 5px 1px no-repeat #fff; }
.ex.plus { background: linear-gradient(#222, #222) 50% 50% / 5px 1px no-repeat, linear-gradient(#222, #222) 50% 50% / 1px 5px no-repeat #fff; }
.off { color: #999; }
.cur { font-weight: 700; }
.hscroll { height: 17px; padding: 8px 52px 0 17px; background: #efefef; border-top: 1px solid #fff; }
.hscroll i { display: block; height: 2px; background: #858585; }
.splitter { height: 6px; margin: 3px 0 2px; background: #d8d8d8; border: 1px solid #aaa; }
.folds button { display: flex; align-items: center; width: 100%; height: 24px; border-bottom: 2px solid #d0d0d0; padding: 4px 0 0 10px; color: #00648c; font-size: 14px; }
.folds button::before { content: ""; border: 4px solid transparent; border-left: 5px solid #00648c; border-right: 0; margin-right: 9px; }

.work { flex: 1; display: flex; flex-direction: column; min-width: 0; }
.docs { display: flex; height: 27px; border-bottom: 2px solid #00618a; font: 12px/16px "Noto Sans", "Noto Sans CJK SC", sans-serif; }
.doc { display: flex; align-items: center; gap: 3px; width: 96px; padding-left: 6px; }
.doc svg { width: 16px; height: 16px; }
.doc.on { width: auto; padding: 0 7px 0 6px; gap: 5px; background: #00618a; color: #fff; }
.doc button svg { width: 10px; height: 10px; }
.canvas { flex: 1; min-height: 0; overflow: hidden; border-right: 1px solid #ccc; border-bottom: 1px solid #ccc; }
.canvas > svg { width: 100%; }
.axis { font-size: 11px; }
.z { fill: #3355ee; }
.x { fill: #cc2222; }

.side { width: 36px; display: flex; flex-direction: column; padding-top: 9px; }
.side button { height: 32px; display: grid; place-items: center; }
.side svg { width: 24px; height: 24px; }
.side hr { width: 28px; margin: 5px auto; border: 0; border-top: 1px solid #ccc; }
.left { margin: auto 0 5px 8px; width: 0; border: 3px solid transparent; border-right-color: #111; border-left: 0; }

footer { display: grid; grid-template-columns: 465px 1fr; align-items: center; height: 23px; padding: 0 3px; border-top: 1px solid #aaa; font-weight: 700; }
.mark { position: absolute; right: 4px; bottom: 2px; font: 13px/18px "Liberation Mono", monospace; color: #666; }
.mark span { font: 300 16px/18px "Noto Sans CJK SC", sans-serif; }
```
